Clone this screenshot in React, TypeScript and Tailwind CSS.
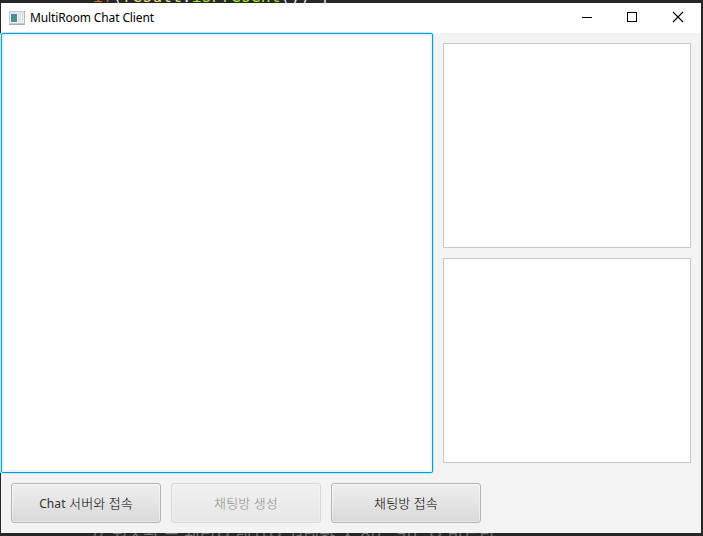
import React from "react";

function ChatButton({ label, disabled = false }: { label: React.ReactNode; disabled?: boolean }) {
  return (
    <button
      disabled={disabled}
      className="h-10 w-[150px] whitespace-nowrap rounded-[3px] border border-[#b5b5b5] bg-linear-to-b from-[#efefef] to-[#d9d9d9] pt-px text-[13px] font-light tracking-[0.1px] text-black shadow-[inset_0_0_0_1px_rgba(255,255,255,0.45)] disabled:opacity-45"
    >
      {label}
    </button>
  );
}

function AppIcon() {
  return (
    <svg width="16" height="14" viewBox="0 0 16 14" shapeRendering="crispEdges">
      <defs>
        <linearGradient id="screen" x1="0" y1="0" x2="1" y2="1">
          <stop offset="0" stopColor="#4e7fae" />
          <stop offset="1" stopColor="#4f9a7c" />
        </linearGradient>
      </defs>
      <rect x="0" y="0" width="16" height="14" fill="#c6c9cb" />
      <rect x="0" y="13" width="16" height="1" fill="#a9adb0" />
      <rect x="15" y="0" width="1" height="14" fill="#b4b8bb" />
      <rect x="1" y="1" width="14" height="2" fill="#e4e6e8" />
      <rect x="1" y="3" width="14" height="9" fill="#f1f3f4" />
      <rect x="2" y="3" width="6" height="8" fill="url(#screen)" />
      <rect x="9" y="3" width="3" height="8" fill="#dde5e8" />
      <rect x="13" y="3" width="1" height="8" fill="#c9dcd6" />
    </svg>
  );
}

export default function App() {
  return (
    <div className="flex h-[536px] w-[703px] flex-col overflow-hidden bg-[#272727] pl-px font-['Noto_Sans','Noto_Sans_CJK_KR',sans-serif]">
      <div className="h-[3px] overflow-hidden whitespace-pre pl-[92px] font-['DejaVu_Sans_Mono',monospace] text-[16.4px] leading-[20px]">
        <div className="-mt-[13px] text-[#d9e8f7]">
          <span className="text-[#cc6c1d]">if</span>(<span className="text-[#f2e077]">result</span>.
          <span className="text-[#a7ec21]">isPresent</span>()) {"{"}
        </div>
      </div>
      <main className="flex h-[530px] w-[700px] flex-col bg-[#f3f3f3]">
        <header className="flex h-[30px] items-center bg-white pl-2">
          <AppIcon />
          <h1 className="ml-[5px] flex-1 text-[12px] leading-4 tracking-[-0.13px] text-black">MultiRoom Chat Client</h1>
          <svg className="mr-px" width="118" height="30" viewBox="0 0 118 30" fill="none" stroke="#000">
            <path d="M0 14.5h10M45.5 9.5h9v9h-9z" shapeRendering="crispEdges" />
            <path d="M91 9l10 10M101 9l-10 10" strokeWidth="1.1" />
          </svg>
        </header>
        <div className="flex h-[440px]">
          <div className="w-[432px] rounded-[2px] border border-[#039ed3] bg-white shadow-[inset_0_0_0_2px_#e8f5fa,0_0_0_1px_#c5e5f1]" />
          <div className="flex flex-1 flex-col gap-[10px] p-[10px]">
            <div className="h-[205px] border border-[#c8c8c8] bg-white" />
            <div className="h-[205px] border border-[#c8c8c8] bg-white" />
          </div>
        </div>
        <footer className="flex gap-[10px] p-[10px]">
          <ChatButton label={<><span className="text-[12px] font-normal text-[#333333]">Chat</span> 서버와 접속</>} />
          <ChatButton label="채팅방 생성" disabled />
          <ChatButton label="채팅방 접속" />
        </footer>
      </main>
      <div className="h-[3px] overflow-hidden whitespace-pre pl-[89px] text-[17.2px] leading-[20px] text-[#707070]">
        <div className="-mt-[3px]">{"//  접속한 후 채팅을 대상을 선택할 수 있는 기능을 만든다."}</div>
      </div>
    </div>
  );
}
